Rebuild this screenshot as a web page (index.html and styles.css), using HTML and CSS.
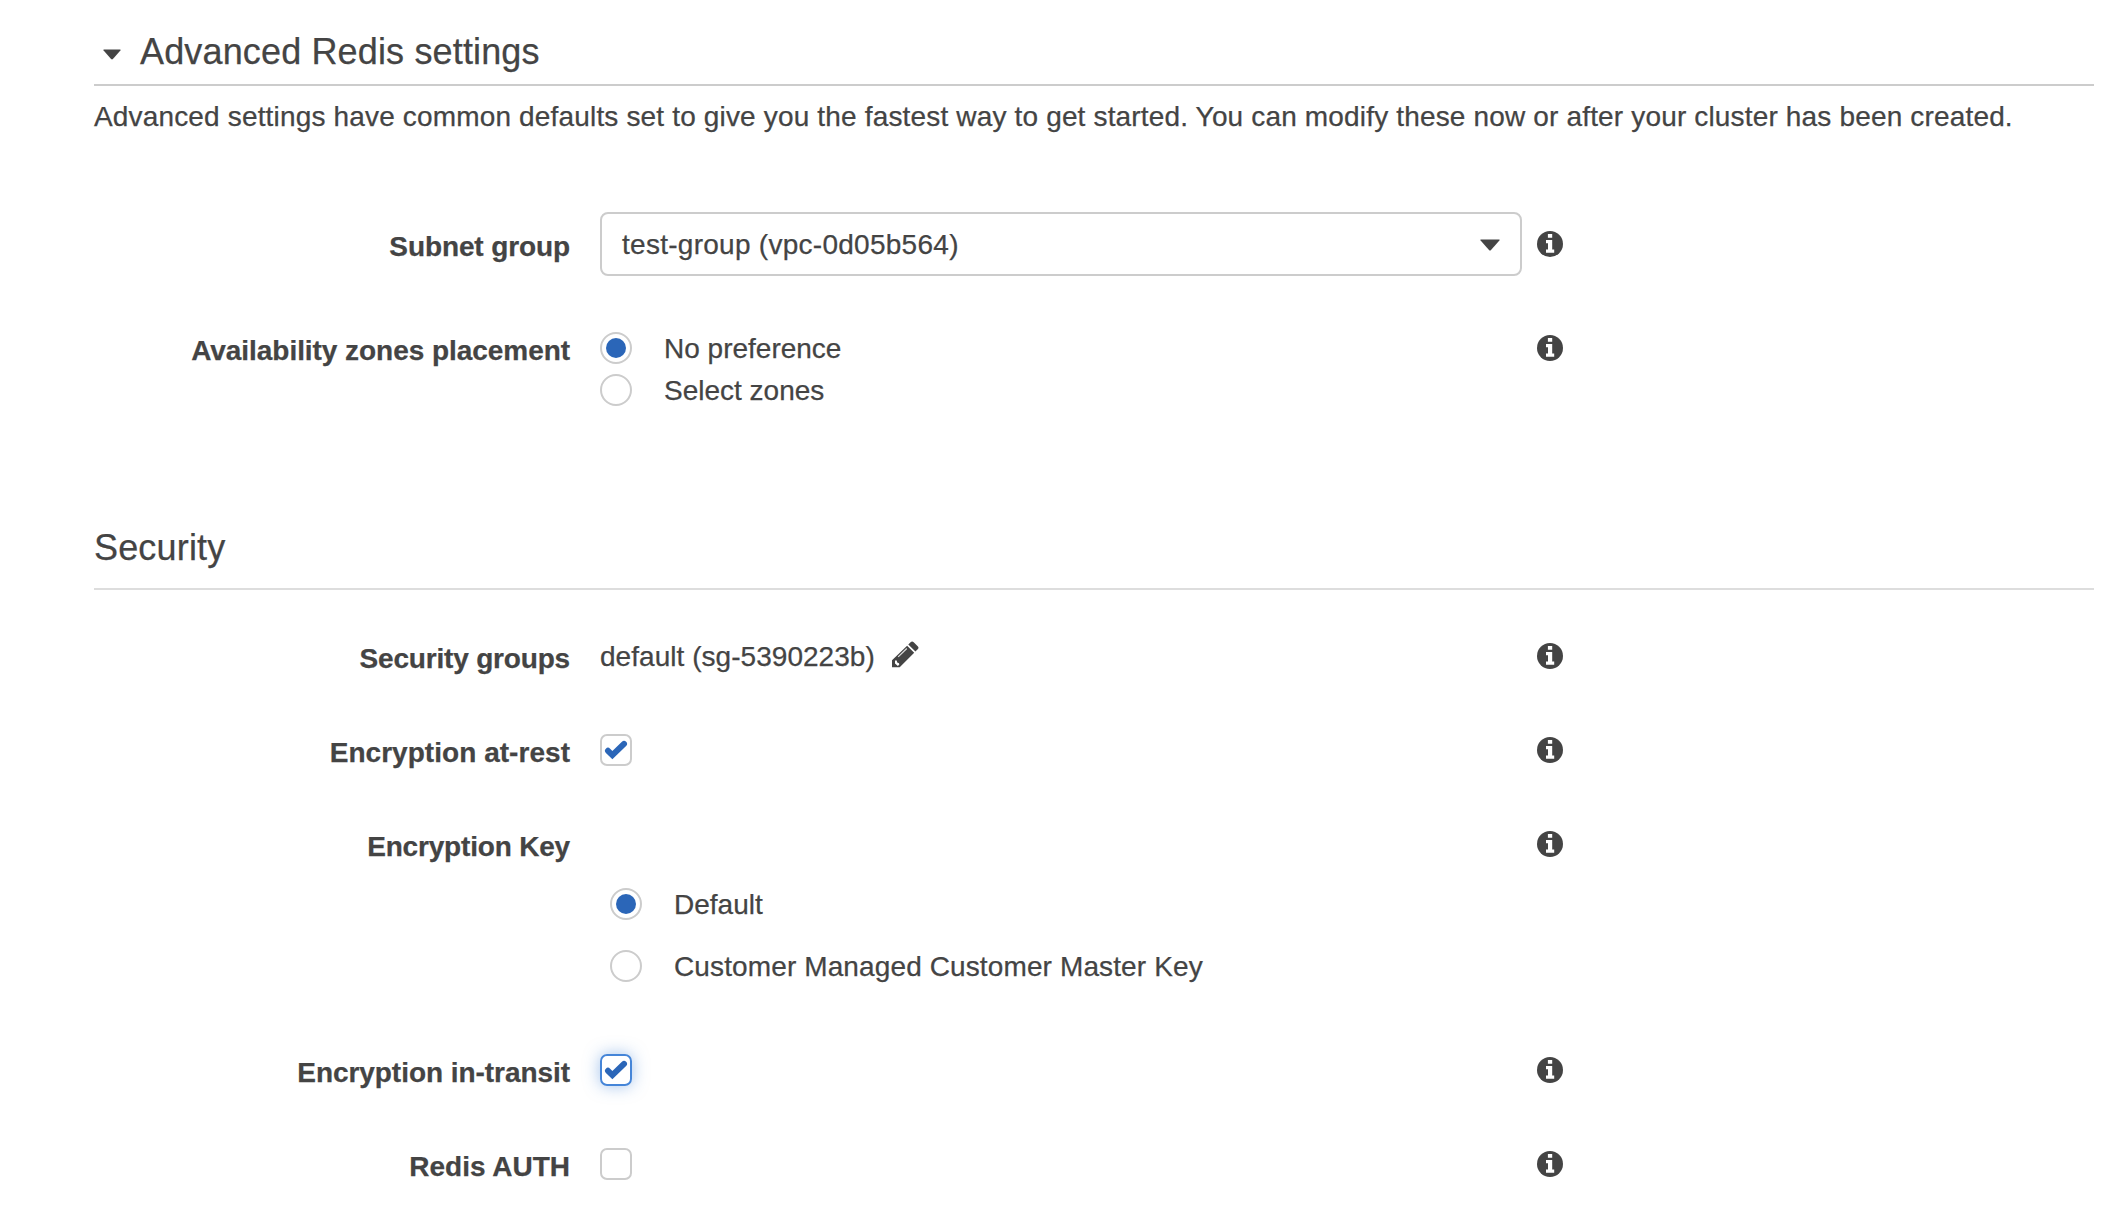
FILE: index.html
```html
<!DOCTYPE html>
<html lang="en">
<head>
<meta charset="utf-8">
<title>Advanced Redis settings</title>
<link rel="stylesheet" href="styles.css">
</head>
<body>
<svg class="defs" width="0" height="0" aria-hidden="true">
  <symbol id="info" viewBox="0 0 26 26">
    <circle cx="13" cy="13" r="13" fill="#444"/>
    <path d="M10.9 2.9h4.3v3.8h-4.3zM9 9.1h6.2v9.400h2v3.200H9v-3.200h2v-6.200H9z" fill="#fff"/>
  </symbol>
  <symbol id="check" viewBox="0 0 24 20">
    <path d="M4 10.800l4.400 4.300L20 3.900" fill="none" stroke="#2b66b8" stroke-width="6" stroke-linecap="round" stroke-linejoin="miter"/>
  </symbol>
</svg>
<main class="page">
  <h1 class="title"><svg class="caret" viewBox="0 0 18 10"><path d="M1 0h16q1 0 .4.900L9.900 9.500q-.9.900-1.800 0L.6.900Q0 0 1 0z"/></svg><span class="title-text">Advanced Redis settings</span></h1>
  <p class="intro">Advanced settings have common defaults set to give you the fastest way to get started. You can modify these now or after your cluster has been created.</p>

  <section class="fields">
    <div class="row row-select">
      <div class="label tight">Subnet group</div>
      <div class="select"><span class="select-text">test-group (vpc-0d05b564)</span><svg class="arrow" viewBox="0 0 20 11"><path d="M1 0h18q1.200 0 .4 1L11 10.400q-1 1-2 0L.6 1Q-.2 0 1 0z"/></svg></div>
      <svg class="info"><use href="#info"/></svg>
    </div>
    <div class="row">
      <div class="label snug">Availability zones placement</div>
      <div class="options">
        <div class="option"><span class="radio on"></span><span>No preference</span></div>
        <div class="option"><span class="radio"></span><span>Select zones</span></div>
      </div>
      <svg class="info"><use href="#info"/></svg>
    </div>
  </section>

  <h2 class="subtitle">Security</h2>
  <section class="fields security">
    <div class="row">
      <div class="label tighter">Security groups</div>
      <div class="value"><span class="group-name">default (sg-5390223b)</span><svg class="pencil" viewBox="0 0 27 27"><path d="M18.600 1.200q1.500-1.600 3.100 0l4 4q1.600 1.500 0 3.100l-2.300 2.300-7.100-7.100zM15.100 4.700l7.100 7.100L7.700 26.300H0v-7.100z" fill="#444"/><path d="M3 19.600h1.700l.5 2 1.800.6.300 1.400-1.400 1.400L3 22.400z" fill="#fff"/><path d="M6.200 15.900L14.800 7.500" stroke="#ddd" stroke-width="1.200"/></svg></div>
      <svg class="info"><use href="#info"/></svg>
    </div>
    <div class="row">
      <div class="label wide">Encryption at-rest</div>
      <div class="value"><span class="checkbox"><svg class="check"><use href="#check"/></svg></span></div>
      <svg class="info"><use href="#info"/></svg>
    </div>
    <div class="row row-key">
      <div class="label tighter">Encryption Key</div>
      <div class="options key-options">
        <div class="option"><span class="radio on"></span><span>Default</span></div>
        <div class="option"><span class="radio"></span><span class="key-name">Customer Managed Customer Master Key</span></div>
      </div>
      <svg class="info"><use href="#info"/></svg>
    </div>
    <div class="row">
      <div class="label snug">Encryption in-transit</div>
      <div class="value"><span class="checkbox focus"><svg class="check"><use href="#check"/></svg></span></div>
      <svg class="info"><use href="#info"/></svg>
    </div>
    <div class="row">
      <div class="label">Redis AUTH</div>
      <div class="value"><span class="checkbox"></span></div>
      <svg class="info"><use href="#info"/></svg>
    </div>
  </section>
</main>
</body>
</html>
```
FILE: styles.css
```css
* { box-sizing: border-box; }

body {
  margin: 0;
  background: #fff;
  color: #444;
  font: 28px/34px "Liberation Sans", Arial, sans-serif;
  -webkit-text-stroke: 0.25px #444;
}

svg { display: block; flex: none; }
.defs { position: absolute; }

.page {
  width: 2000px;
  margin-left: 94px;
  padding-top: 31px;
}

.title, .subtitle {
  margin: 0;
  font-size: 36px;
  font-weight: 400;
  line-height: 42px;
  white-space: nowrap;
}

.title {
  display: flex;
  height: 55px;
  padding-left: 9px;
  border-bottom: 2px solid #ccc;
}

.title-text { letter-spacing: 0.15px; }

.caret {
  width: 18px;
  height: 11px;
  margin: 18px 19px 0 0;
  fill: #444;
}

.intro {
  height: 32px;
  margin: 14px 0 0;
  letter-spacing: 0.163px;
  white-space: nowrap;
}

.fields {
  display: flex;
  flex-direction: column;
  gap: 62px;
  padding-top: 80px;
}

.row {
  display: grid;
  grid-template-columns: 476px 922px 26px;
  column-gap: 30px;
  align-items: start;
  white-space: nowrap;
}

.row > .info { margin: 3px 0 0 -15px; }
.row-select { margin-bottom: -6px; }
.row-select .label { padding-top: 18px; }
.row-select > .info { margin-top: 19px; }

.label {
  margin-bottom: -4px;
  padding-top: 2px;
  text-align: right;
  font-weight: 700;
}

.snug { letter-spacing: -0.05px; }
.tight { letter-spacing: -0.11px; }
.tighter { letter-spacing: -0.18px; }
.wide { letter-spacing: 0.04px; }

.info { width: 26px; height: 26px; }

.select {
  display: flex;
  justify-content: space-between;
  height: 64px;
  padding: 14px 20px;
  border: 2px solid #ccc;
  border-radius: 8px;
}

.select-text { letter-spacing: 0.27px; }

.arrow {
  width: 20px;
  height: 12px;
  margin-top: 11px;
  fill: #444;
}

.options { display: flex; flex-direction: column; gap: 10px; }

.option { display: flex; height: 32px; gap: 32px; }

.key-options { gap: 30px; padding: 60px 0 0 10px; }
.row-key { margin-bottom: 10px; }
.key-name { letter-spacing: 0.12px; }

.radio {
  display: flex;
  align-items: center;
  justify-content: center;
  width: 32px;
  height: 32px;
  border: 2px solid #ccc;
  border-radius: 50%;
}

.radio.on::before {
  content: "";
  width: 20px;
  height: 20px;
  border-radius: 50%;
  background: #2b66b8;
}

.subtitle {
  height: 63px;
  margin-top: 121px;
  border-bottom: 2px solid #ddd;
  letter-spacing: 0.17px;
}

.security { padding-top: 50px; }

.value { display: flex; height: 32px; }

.group-name { letter-spacing: 0.04px; }

.pencil { width: 27px; height: 27px; margin: 1px 0 0 17px; }

.checkbox {
  display: flex;
  width: 32px;
  height: 32px;
  padding: 4px 2px;
  border: 2px solid #ccc;
  border-radius: 7px;
}

.checkbox.focus {
  border-color: #4585d8;
  box-shadow: 0 0 16px rgba(69, 133, 216, 0.5);
}

.check { width: 24px; height: 20px; }
```
